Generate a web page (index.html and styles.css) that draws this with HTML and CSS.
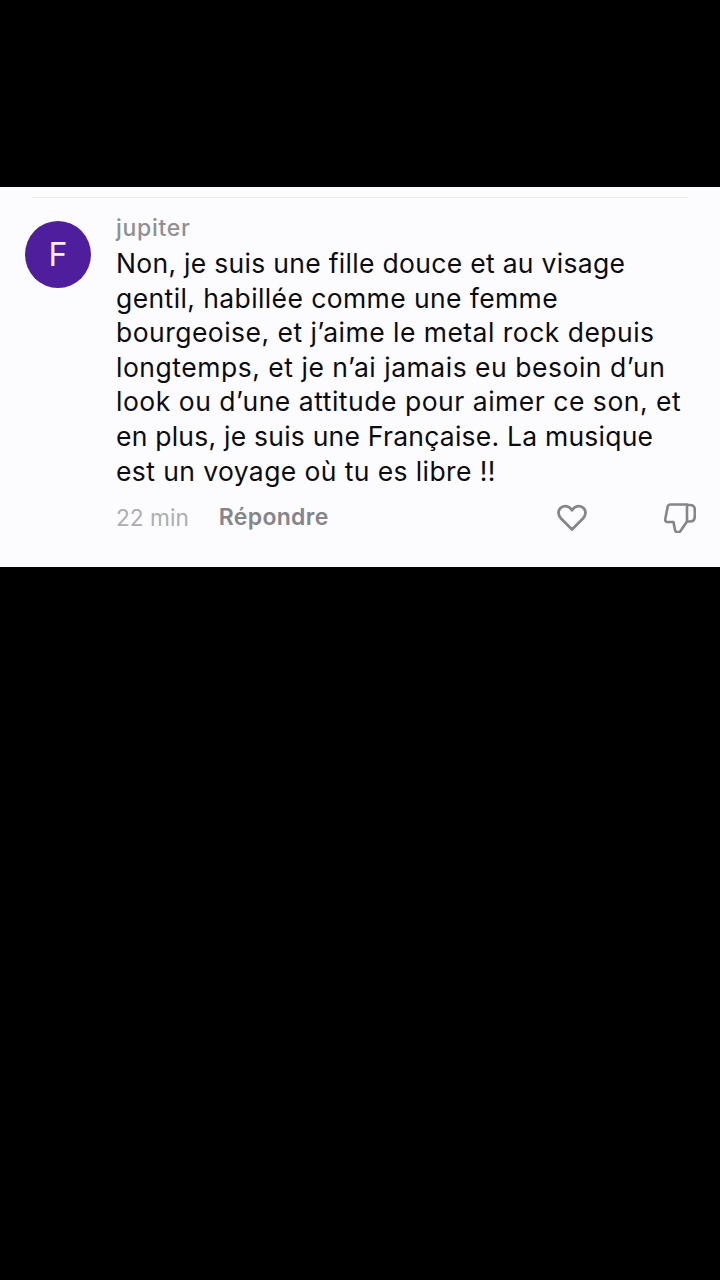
FILE: index.html
```html
<!DOCTYPE html>
<html lang="fr">
<head>
<meta charset="utf-8">
<title>Commentaire</title>
<link rel="stylesheet" href="styles.css">
</head>
<body>
<main class="screen">
  <section class="card">
    <div class="divider"></div>
    <article class="comment">
      <div class="avatar">F</div>
      <div class="body">
        <div class="author">jupiter</div>
        <p class="text">
          <span class="line tight">Non, je suis une fille douce et au visage</span>
          <span class="line">gentil, habillée comme une femme</span>
          <span class="line roomy">bourgeoise, et j’aime le metal rock depuis</span>
          <span class="line wide">longtemps, et je n’ai jamais eu besoin d’un</span>
          <span class="line wide">look ou d’une attitude pour aimer ce son, et</span>
          <span class="line tighter">en plus, je suis une Française. La musique</span>
          <span class="line">est un voyage où tu es libre !!</span>
        </p>
        <div class="meta">
          <span class="time">22 min</span>
          <span class="reply">Répondre</span>
          <span class="actions">
            <svg class="icon" viewBox="0 0 32 32" fill="none" stroke="#85858a" stroke-width="2.8" stroke-linejoin="round" stroke-linecap="round"><path d="M16 28.5 4.8 17.2C1.5 13.6 1.9 8.6 5.3 6.3 8.9 3.9 13.3 5 16 9.2 18.7 5 23.1 3.9 26.7 6.3 30.1 8.6 30.5 13.6 27.2 17.2Z"/></svg>
            <svg class="icon" viewBox="0 0 32 32" fill="none" stroke="#85858a" stroke-width="2.6" stroke-linejoin="round" stroke-linecap="round"><path d="M6.5 3.5H23V20.5L16.5 30C15 32 11.5 31.5 11 29L9.5 21H3.5C1.8 21 1 19.8 1.2 18.3L3.6 6C3.9 4.4 5 3.5 6.5 3.5Z"/><path d="M23 4H26C29 4 30.8 6 30.8 9V15C30.8 18.5 29 20.5 26 20.5H23"/></svg>
          </span>
        </div>
      </div>
    </article>
  </section>
</main>
</body>
</html>
```

FILE: styles.css
```css
html, body {
  margin: 0;
  padding: 0;
  background: #000;
}
.screen {
  height: 1280px;
  padding-top: 187px;
  box-sizing: border-box;
  overflow: hidden;
}
.card {
  height: 380px;
  background: #fcfcfe;
  padding-top: 10px;
  box-sizing: border-box;
  font-family: Inter, "Liberation Sans", sans-serif;
}
.divider {
  height: 1px;
  margin: 0 32px;
  background: #ececee;
}
.comment {
  display: flex;
  padding: 23px 0 0 25px;
}
.avatar {
  flex: none;
  width: 66px;
  height: 67px;
  margin-right: 25px;
  border-radius: 50%;
  background: #4f1e9c;
  color: #f4eefc;
  font-size: 32px;
  line-height: 67px;
  text-align: center;
}
.body {
  flex: 1;
  min-width: 0;
}
.author {
  margin-top: -7px;
  height: 28px;
  font-size: 23px;
  line-height: 28px;
  font-weight: 500;
  letter-spacing: 0.7px;
  color: #8f8f94;
}
.text {
  margin: 4px 0 0;
  font-size: 26.5px;
  line-height: 34.6px;
  letter-spacing: 0.4px;
  color: #0c0c10;
  white-space: nowrap;
}
.line {
  display: block;
}
.tight {
  letter-spacing: 0.3px;
}
.roomy {
  letter-spacing: 0.47px;
}
.wide {
  letter-spacing: 0.52px;
}
.tighter {
  letter-spacing: 0.23px;
}
.meta {
  display: flex;
  align-items: center;
  margin-top: 12px;
  height: 34px;
  font-size: 22.7px;
}
.time {
  color: #adadb1;
  margin-right: 30px;
}
.reply {
  color: #85858a;
  font-weight: 600;
  font-size: 23px;
  letter-spacing: 0.3px;
}
.actions {
  display: flex;
  gap: 76px;
  margin-left: auto;
  margin-right: 24px;
}
.icon {
  width: 32px;
  height: 32px;
}
```
